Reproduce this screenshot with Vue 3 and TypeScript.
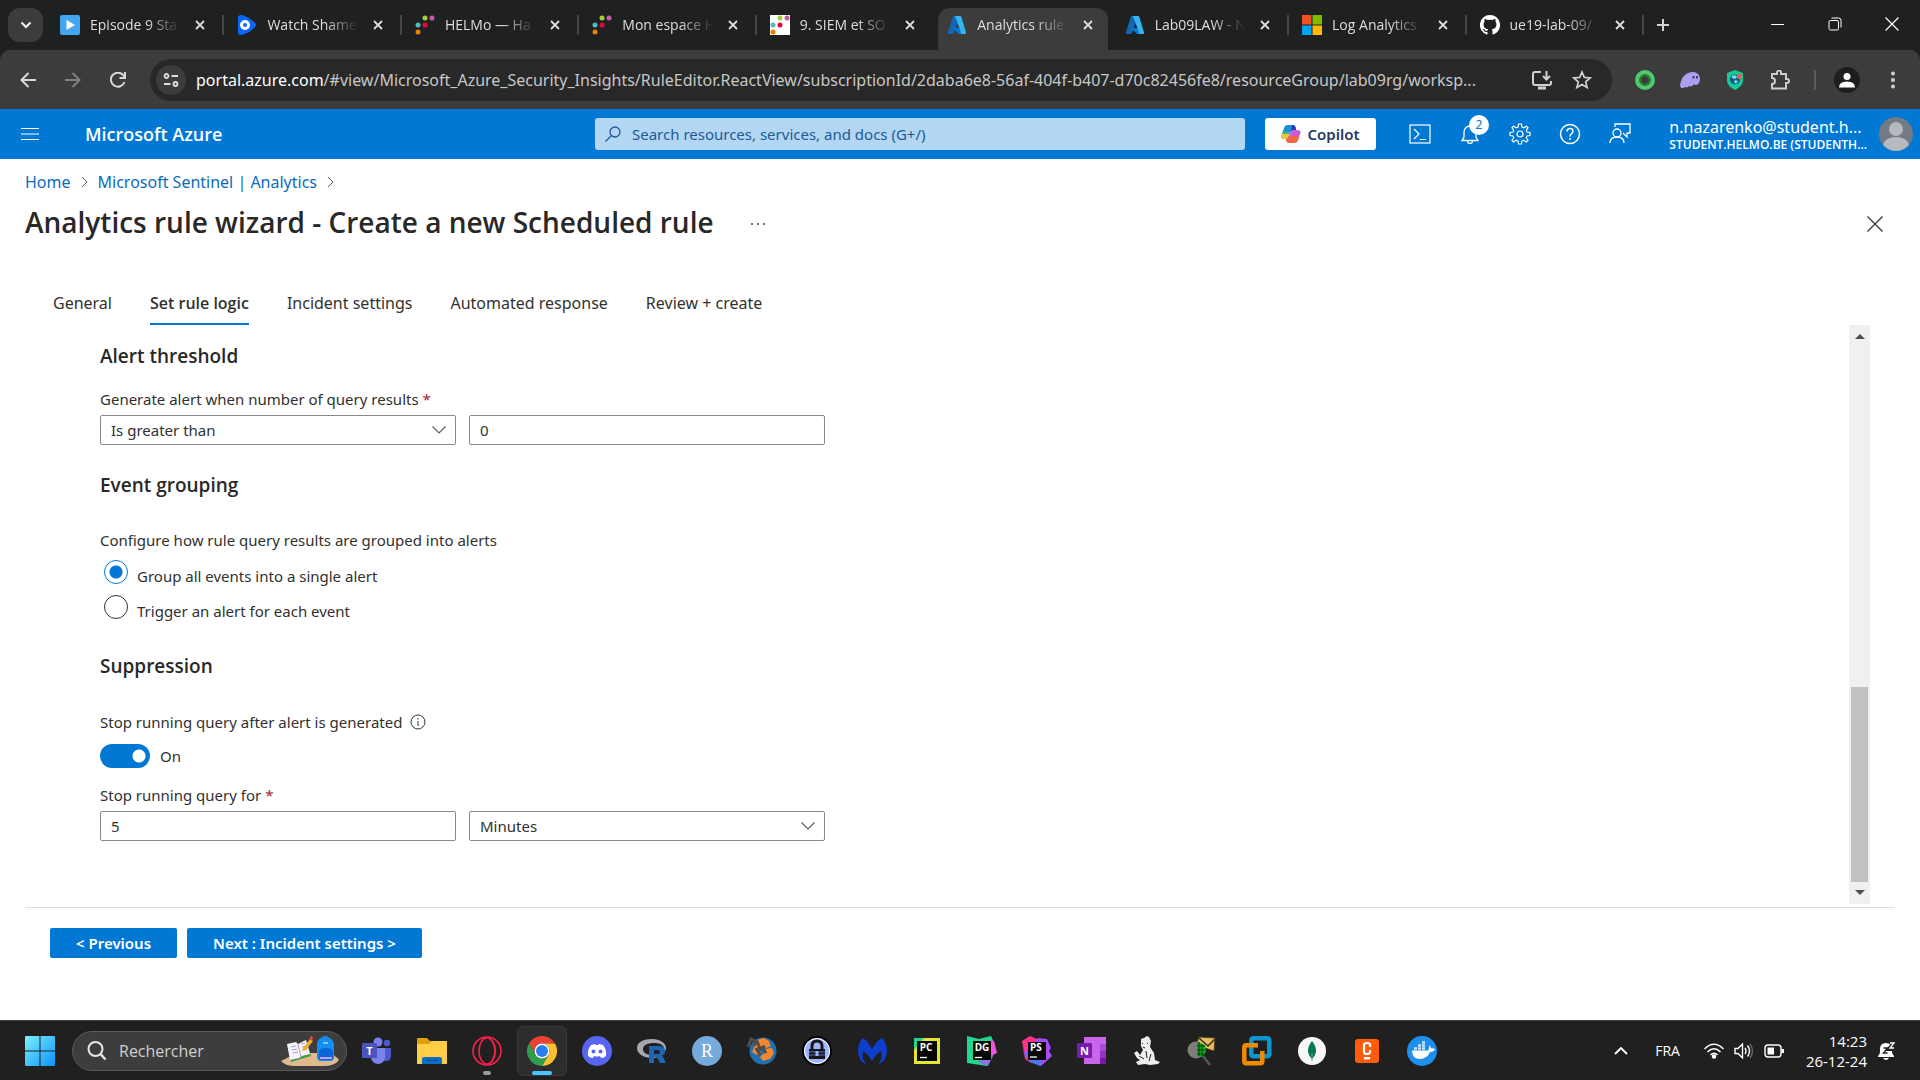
<script setup lang="ts">
import { ref } from 'vue'

interface BrowserTab {
  title: string
  icon: string
  active?: boolean
  divider?: boolean
}

const tabs: BrowserTab[] = [
  { title: 'Episode 9 Sta', icon: 'play', divider: true },
  { title: 'Watch Shame', icon: 'watch', divider: true },
  { title: 'HELMo — Ha', icon: 'helmo', divider: true },
  { title: 'Mon espace H', icon: 'helmo', divider: true },
  { title: '9. SIEM et SO', icon: 'helmo-box' },
  { title: 'Analytics rule', icon: 'azure', active: true },
  { title: 'Lab09LAW - N', icon: 'azure', divider: true },
  { title: 'Log Analytics', icon: 'microsoft', divider: true },
  { title: 'ue19-lab-09/', icon: 'github', divider: true },
]

const steps = ['General', 'Set rule logic', 'Incident settings', 'Automated response', 'Review + create']
const currentStep = ref('Set rule logic')

const operator = ref('Is greater than')
const threshold = ref('0')
const grouping = ref('single')
const suppression = ref(true)
const duration = ref('5')
const unit = ref('Minutes')
const search = ref('')
const taskSearch = ref('')
</script>

<template>
  <div class="screen">
    <header class="browser">
      <div class="tabstrip">
        <button class="tab-search" aria-label="Search tabs">
          <svg width="12" height="8" viewBox="0 0 12 8"><path d="M1.500 1.500 6 6l4.500-4.500" fill="none" stroke="#fff" stroke-width="2" /></svg>
        </button>
        <div class="tabs">
          <div v-for="tab in tabs" :key="tab.title" class="tab" :class="{ active: tab.active, divider: tab.divider }">
            <svg class="favicon" width="20" height="20" viewBox="0 0 20 20">
              <g v-if="tab.icon === 'play'">
                <rect width="20" height="20" rx="2" fill="#42a7f0" /><path d="M6.500 5v10l8.500-5z" fill="#fff" />
              </g>
              <g v-else-if="tab.icon === 'watch'">
                <path d="M1 3Q1 0 4 0c4 0 15 7 15 10S8 20 4 20Q1 20 1 17z" fill="#0866ff" />
                <circle cx="8" cy="10" r="3.500" fill="none" stroke="#fff" stroke-width="3" />
              </g>
              <g v-else-if="tab.icon === 'helmo' || tab.icon === 'helmo-box'">
                <rect v-if="tab.icon === 'helmo-box'" width="20" height="20" fill="#fff" />
                <circle cx="10" cy="3" r="2.500" fill="#a6cd3a" /><circle cx="17" cy="3" r="2.500" fill="#c75ba1" />
                <circle cx="3" cy="10" r="2.500" fill="#4fbdbb" /><circle cx="10" cy="10" r="2.500" fill="#e5053f" />
                <circle cx="3" cy="17" r="2.500" fill="#f57c00" />
              </g>
              <g v-else-if="tab.icon === 'azure'">
                <path d="M7 1h6L7 18q-.4 1-1.500 1H2q-1.500 0-1-1.500L5.700 2q.3-1 1.300-1z" fill="#1267b5" />
                <path d="M15 13H5.500l6 5.500q.5.500 1.500.500h5z" fill="#0078d4" />
                <path d="M7 1h6q1 0 1.400 1L19 17.500q.5 1.500-1 1.500h-5q1.300-.4 1-1.500L8.300 2Q8 1.200 7 1z" fill="#36b4ee" />
              </g>
              <g v-else-if="tab.icon === 'microsoft'">
                <path d="M0 0h9.500v9.500H0z" fill="#f25022" /><path d="M10.500 0H20v9.500h-9.500z" fill="#7fba00" />
                <path d="M0 10.500h9.500V20H0z" fill="#00a4ef" /><path d="M10.500 10.500H20V20h-9.500z" fill="#ffb900" />
              </g>
              <g v-else>
                <path d="M10 0a10 10 0 0 0-3.200 19.500c.5.1.7-.2.7-.5v-2c-2.800.6-3.400-1.200-3.400-1.200-.4-1.100-1.100-1.400-1.100-1.400-.9-.6.1-.6.1-.6 1 .1 1.500 1 1.500 1 .9 1.500 2.400 1.100 2.900.8.1-.6.4-1.100.7-1.300-2.300-.3-4.600-1.100-4.600-5 0-1.100.4-2 1-2.700-.1-.2-.4-1.300.1-2.600 0 0 .9-.3 2.800 1a9.500 9.500 0 0 1 5 0c1.900-1.300 2.800-1 2.800-1 .5 1.300.2 2.400.1 2.600.6.7 1 1.600 1 2.700 0 3.900-2.400 4.700-4.600 5 .4.300.7.9.7 1.900V19c0 .3.2.6.7.5A10 10 0 0 0 10 0z" fill="#fff" />
              </g>
            </svg>
            <span class="tab-title">{{ tab.title }}</span>
            <button class="tab-close" aria-label="Close tab">
              <svg width="10" height="10" viewBox="0 0 10 10"><path d="m1 1 8 8M9 1 1 9" stroke="#dedede" stroke-width="1.800" /></svg>
            </button>
          </div>
        </div>
        <button class="new-tab" aria-label="New tab">
          <svg width="14" height="14" viewBox="0 0 14 14"><path d="M7 1v12M1 7h12" stroke="#d5d5d5" stroke-width="2" /></svg>
        </button>
        <div class="window-controls">
          <button aria-label="Minimize"><svg width="14" height="14" viewBox="0 0 14 14"><path d="M0 7.500h13" stroke="#fff" /></svg></button>
          <button aria-label="Restore">
            <svg width="14" height="14" viewBox="0 0 14 14" fill="none" stroke="#fff"><rect x="1" y="3.500" width="9.500" height="9.500" rx="1.500" /><path d="M3.500 1h7q2.500 0 2.500 2.500v7" /></svg>
          </button>
          <button aria-label="Close"><svg width="14" height="14" viewBox="0 0 14 14"><path d="m.5.500 13 13m0-13-13 13" stroke="#fff" stroke-width="1.200" /></svg></button>
        </div>
      </div>

      <div class="toolbar">
        <nav class="history">
          <button aria-label="Back"><svg width="16" height="16" viewBox="0 0 16 16" fill="none" stroke="#d8d8d8" stroke-width="2"><path d="M16 8H2M8.500 1 1.500 8l7 7" /></svg></button>
          <button aria-label="Forward"><svg width="16" height="16" viewBox="0 0 16 16" fill="none" stroke="#808080" stroke-width="2"><path d="M0 8h14M7.500 1l7 7-7 7" /></svg></button>
          <button aria-label="Reload"><svg width="16" height="16" viewBox="0 0 16 16" fill="none" stroke="#d8d8d8" stroke-width="2"><path d="M14.500 10A7 7 0 1 1 13.500 3.500L15 5.500M15 0v6H9.500" /></svg></button>
        </nav>
        <div class="omnibox">
          <button class="site-info" aria-label="Site information">
            <svg width="16" height="14" viewBox="0 0 16 14" fill="none" stroke="#dedede" stroke-width="1.800"><circle cx="3.500" cy="3" r="2" /><path d="M8.500 3H15M1 11h6.500" /><circle cx="12.500" cy="11" r="2" /></svg>
          </button>
          <span class="url"><b>portal.azure.com</b>/#view/Microsoft_Azure_Security_Insights/RuleEditor.ReactView/subscriptionId/2daba6e8-56af-404f-b407-d70c82456fe8/resourceGroup/lab09rg/worksp...</span>
          <button aria-label="Install app"><svg width="22" height="20" viewBox="0 0 22 20" fill="none" stroke="#d0d0d0" stroke-width="2"><path d="M10 2H4Q2 2 2 4v9q0 2 2 2h14q2 0 2-2v-2M15.500 1v8M12 6l3.500 3.500L19 6" /><path d="M7 18h8" stroke-width="3" /></svg></button>
          <button aria-label="Bookmark"><svg width="20" height="20" viewBox="0 0 20 20" fill="none" stroke="#d0d0d0" stroke-width="1.700"><path d="m10 2 2.300 5.400 5.900.5-4.500 3.900 1.400 5.700-5.100-3-5.100 3 1.400-5.700-4.500-3.900 5.900-.5z" /></svg></button>
        </div>
        <div class="extensions">
          <button aria-label="Ring extension"><svg width="20" height="20" viewBox="0 0 20 20"><circle cx="10" cy="10" r="7" fill="none" stroke="#53c96d" stroke-width="6" /><circle cx="10" cy="10" r="5" fill="none" stroke="#237c3a" stroke-width="2" /></svg></button>
          <button aria-label="Wallet extension"><svg width="20" height="20" viewBox="0 0 20 20"><path d="M0 16C1 7 6 2 13 2c4 0 7 3 7 7 0 3-2 6-4 6-1 0-1.500-.5-2-1-1 2-3 3-5 2-1 1-2 2-4 1-1 1-4 2-5-1z" fill="#ab9ff2" /><path d="M13.500 6v2.500M17 6v2.500" stroke="#3c315b" stroke-width="1.800" /></svg></button>
          <button aria-label="Shield extension"><svg width="20" height="20" viewBox="0 0 20 20"><path d="m10 0 8 3v7c0 5-4 8-8 10-4-2-8-5-8-10V3z" fill="#18c997" /><circle cx="10" cy="9.500" r="5" fill="#15588b" /><path d="M7 6q4-2 5 1l-2 2-3-1zM10 10l3 1-2 3-2-2z" fill="#6ee7d5" /><circle cx="14.500" cy="6.500" r="2.500" fill="#ef5b5b" /></svg></button>
          <button aria-label="Extensions"><svg width="20" height="20" viewBox="0 0 20 20" fill="none" stroke="#d0d0d0" stroke-width="1.900"><path d="M2 4h5V2.500a2 2 0 0 1 4 0V4h5v5h1a2 2 0 0 1 0 4h-1v5.500H2V14a3 3 0 0 0 0-6z" /></svg></button>
          <i class="rule"></i>
          <button class="profile" aria-label="Profile"><svg width="16" height="16" viewBox="0 0 16 16" fill="#fff"><circle cx="8" cy="4.500" r="3.500" /><path d="M0 15.500q0-6 8-6t8 6z" /></svg></button>
          <button aria-label="Menu"><svg width="4" height="18" viewBox="0 0 4 18" fill="#d0d0d0"><circle cx="2" cy="2.500" r="2" /><circle cx="2" cy="9" r="2" /><circle cx="2" cy="15.500" r="2" /></svg></button>
        </div>
      </div>
    </header>

    <header class="azure">
      <div class="azure-left">
        <button class="burger" aria-label="Show portal menu"><svg width="18" height="14" viewBox="0 0 18 14"><path d="M0 1.500h18M0 7h18M0 12.500h18" stroke="#fff" stroke-width="1.200" /></svg></button>
        <a class="brand" href="#home">Microsoft Azure</a>
      </div>
      <label class="azure-search">
        <svg width="16" height="16" viewBox="0 0 16 16" fill="none" stroke="#1a5c99" stroke-width="1.300"><circle cx="10" cy="6" r="5" /><path d="M6.500 9.500.5 15.500" /></svg>
        <input v-model="search" type="text" aria-label="Search" placeholder="Search resources, services, and docs (G+/)" />
      </label>
      <div class="azure-right">
        <button class="copilot">
          <svg width="20" height="20" viewBox="0 0 20 20">
            <path d="M6 1h6q2 0 2.500 2l.5 3h-3Q10 6 9 9l-1.500 4Q7 15 5 15H2.500Q0 15 .5 12L3 4q1-3 3-3z" fill="#1b8ee0" />
            <path d="M1 10 .5 12Q0 15 2.500 15H5q2 0 2.500-2l1-3z" fill="#f2c230" />
            <path d="M2 7 1 10h7.500L9 8z" fill="#3db58a" />
            <path d="M12 6h4q4 0 3.500 3L17 16q-1 3-3 3H8q-2 0-2.500-2L5 15q2 0 2.500-2L10 7.500Q10.500 6 12 6z" fill="#c95adb" />
            <path d="m8 12-.5 1Q7 15 5 15l.5 2q.5 2 2.500 2h6q2 0 3-3l1.300-4z" fill="#f1673f" />
            <path d="M11 1h1q2 0 2.500 2l.5 3h-3q-1 0-2 1.500z" fill="#253db0" />
          </svg>
          <span>Copilot</span>
        </button>
        <div class="azure-icons">
          <button aria-label="Cloud Shell"><svg width="22" height="20" viewBox="0 0 22 20" fill="none" stroke="#fff" stroke-width="1.200"><rect x="1" y="1" width="20" height="18" /><path d="m5 5 5 5-5 5M11 15.500h6" /></svg></button>
          <button class="bell" aria-label="Notifications">
            <svg width="18" height="20" viewBox="0 0 18 20" fill="none" stroke="#fff" stroke-width="1.300"><path d="M1 16.500h16l-2-3.500V8A6 6 0 0 0 3 8v5zM6.500 17a2.500 2.500 0 0 0 5 0" /></svg>
            <span class="badge">2</span>
          </button>
          <button aria-label="Settings"><svg width="22" height="22" viewBox="0 0 22 22" fill="none" stroke="#fff" stroke-width="1.200"><path d="m9.500 1-.5 3-1.800.8L4.500 3.200 3 4.700l1.700 2.700L4 9l-3 .5v3l3 .5.700 1.700L3 17.400 4.500 19l2.700-1.800L9 18l.5 3h3l.5-3 1.700-.7 2.700 1.700 1.600-1.600-1.700-2.700L18 13l3-.5v-3L18 9l-.7-1.600L19 4.700l-1.600-1.500-2.700 1.600L13 4l-.5-3z" /><circle cx="11" cy="11" r="3" /></svg></button>
          <button aria-label="Help"><svg width="22" height="22" viewBox="0 0 22 22" fill="none" stroke="#fff" stroke-width="1.500"><circle cx="11" cy="11" r="9.500" /><path d="M8 8.500q0-3 3-3t3 2.700c0 2.300-3 2.300-3 5.300M11 15v2" /></svg></button>
          <button aria-label="Feedback"><svg width="22" height="22" viewBox="0 0 22 22" fill="none" stroke="#fff" stroke-width="1.300"><circle cx="8" cy="10" r="4" /><path d="M1 20q0-6 7-6t7 6M6 4V1h15v9h-3v4l-4-4" /></svg></button>
        </div>
        <button class="account">
          <span class="account-text"><span class="user">n.nazarenko@student.h...</span><span class="tenant">STUDENT.HELMO.BE (STUDENTH...</span></span>
          <svg width="34" height="34" viewBox="0 0 34 34"><defs><clipPath id="avatar"><circle cx="17" cy="17" r="17" /></clipPath></defs><g clip-path="url(#avatar)"><path d="M0 0h34v34H0z" fill="#737a85" /><circle cx="17" cy="12" r="7" fill="#b5babf" /><path d="M3 34q0-14 14-14t14 14z" fill="#b5babf" /></g></svg>
        </button>
      </div>
    </header>

    <main class="blade">
      <nav class="crumbs" aria-label="Breadcrumb">
        <a href="#home">Home</a>
        <svg width="7" height="12" viewBox="0 0 7 12"><path d="m1 1 5 5-5 5" fill="none" stroke="#605e5c" /></svg>
        <a href="#analytics">Microsoft Sentinel | Analytics</a>
        <svg width="7" height="12" viewBox="0 0 7 12"><path d="m1 1 5 5-5 5" fill="none" stroke="#605e5c" /></svg>
      </nav>
      <div class="title-row">
        <h1>Analytics rule wizard - Create a new Scheduled rule</h1>
        <button class="more" aria-label="More"><svg width="14" height="2" viewBox="0 0 14 2" fill="#444"><circle cx="1" cy="1" r="1" /><circle cx="7" cy="1" r="1" /><circle cx="13" cy="1" r="1" /></svg></button>
        <button class="blade-close" aria-label="Close"><svg width="16" height="16" viewBox="0 0 16 16"><path d="m.5.500 15 15m0-15-15 15" stroke="#323130" stroke-width="1.200" /></svg></button>
      </div>

      <div class="steps" role="tablist">
        <button v-for="step in steps" :key="step" role="tab" :class="{ current: step === currentStep }" @click="currentStep = step">{{ step }}</button>
      </div>

      <div class="pane">
        <form class="form" @submit.prevent>
          <section class="threshold">
            <h2>Alert threshold</h2>
            <label for="operator">Generate alert when number of query results <em>*</em></label>
            <div class="pair">
              <div class="select">
                <select id="operator" v-model="operator"><option>Is greater than</option><option>Is fewer than</option></select>
                <svg width="14" height="8" viewBox="0 0 14 8"><path d="m.5.500 6.500 6.500L13.500.500" fill="none" stroke="#605e5c" stroke-width="1.200" /></svg>
              </div>
              <input v-model="threshold" type="text" aria-label="Threshold" />
            </div>
          </section>

          <section class="grouping">
            <h2>Event grouping</h2>
            <p>Configure how rule query results are grouped into alerts</p>
            <label class="radio"><input v-model="grouping" type="radio" value="single" /><span>Group all events into a single alert</span></label>
            <label class="radio"><input v-model="grouping" type="radio" value="each" /><span>Trigger an alert for each event</span></label>
          </section>

          <section class="suppression">
            <h2>Suppression</h2>
            <label class="info" for="suppress">Stop running query after alert is generated
              <svg width="16" height="16" viewBox="0 0 16 16" fill="none" stroke="#323130"><circle cx="8" cy="8" r="7" /><path d="M8 7v5M8 4v1.500" /></svg>
            </label>
            <div class="toggle"><input id="suppress" v-model="suppression" type="checkbox" role="switch" /><span>{{ suppression ? 'On' : 'Off' }}</span></div>
            <label for="duration">Stop running query for <em>*</em></label>
            <div class="pair">
              <input id="duration" v-model="duration" type="text" />
              <div class="select">
                <select v-model="unit" aria-label="Unit"><option>Minutes</option><option>Hours</option></select>
                <svg width="14" height="8" viewBox="0 0 14 8"><path d="m.5.500 6.500 6.500L13.500.500" fill="none" stroke="#605e5c" stroke-width="1.200" /></svg>
              </div>
            </div>
          </section>
        </form>
        <div class="scrollbar" aria-hidden="true">
          <svg width="10" height="5" viewBox="0 0 10 5"><path d="m0 5 5-5 5 5z" fill="#505050" /></svg>
          <i></i>
          <svg width="10" height="5" viewBox="0 0 10 5"><path d="m0 0 5 5 5-5z" fill="#505050" /></svg>
        </div>
      </div>

      <footer class="actions">
        <button>&lt; Previous</button>
        <button>Next : Incident settings &gt;</button>
      </footer>
    </main>

    <footer class="taskbar">
      <button class="start" aria-label="Start">
        <svg width="30" height="30" viewBox="0 0 30 30"><defs><linearGradient id="win" x1="0" y1="0" x2="1" y2="1"><stop offset="0" stop-color="#7cf0ff" /><stop offset="1" stop-color="#0a93fb" /></linearGradient></defs><path d="M1 0h13.500v14.500H0V1q0-1 1-1zm14.500 0H29q1 0 1 1v13.500H15.500zM0 15.500h14.500V30H1q-1 0-1-1zm15.500 0H30V29q0 1-1 1H15.500z" fill="url(#win)" /></svg>
      </button>
      <label class="task-search">
        <svg width="20" height="20" viewBox="0 0 20 20" fill="none" stroke="#e6e6e6"><circle cx="8.500" cy="8" r="7" stroke-width="2" /><path d="m13.500 13 5 5.500" stroke-width="2.500" /></svg>
        <input v-model="taskSearch" type="text" aria-label="Rechercher" placeholder="Rechercher" />
        <svg width="58" height="32" viewBox="0 0 58 32">
          <path d="M0 26 16 18h30q9 2 12 7-4 6-16 6H14Q4 31 0 26z" fill="#e0b98c" />
          <path d="m7 12 19-5 4 14-20 6z" fill="#3f9d52" /><path d="m6 9 9-2 2 2 8-4 4 14-8 2-3 2-9 2z" fill="#f5f2fa" /><path d="m17 9 3 13M10 12l5-1m-4 4 5-1m-4 4 5-1m3-8 4-1m-3 4 4-1m-3 4 4-1" stroke="#aaa3bd" />
          <path d="m22 13 7-9 3 2-7 9-4 1z" fill="#f7a92b" /><path d="m28 4 2-3 2 1-1 4z" fill="#e2474b" />
          <path d="M41 4q3-5 7 0" fill="none" stroke="#2c7dd0" stroke-width="2" /><path d="M36 10q0-8 8-8t9 8v12q0 4-4 4h-9q-4 0-4-4z" fill="#148df5" /><path d="M38 17q0-4 7-4t7 4v6q0 2-2 2H40q-2 0-2-2z" fill="#0965d8" /><path d="M39 22h12v2H39z" fill="#c8a1ff" /><path d="M42 8h5" stroke="#75d3ff" stroke-width="2" />
        </svg>
      </label>

      <div class="apps">
        <button aria-label="Teams"><svg viewBox="0 0 30 30"><circle cx="16" cy="6" r="4.500" fill="#7b83eb" /><circle cx="25" cy="7" r="3.200" fill="#5059c9" /><path d="M20 12h9v8q0 5-5 5h-4z" fill="#5059c9" /><path d="M9 12h14v9a7 7 0 0 1-14 0z" fill="#7b83eb" /><rect y="7" width="15" height="15" rx="1" fill="#4b53bc" /><text x="7.500" y="18.500" font-size="11" class="glyph" fill="#fff">T</text></svg></button>
        <button aria-label="File Explorer"><svg viewBox="0 0 30 30"><path d="M0 3q0-1 1-1h9l3 3h16q1 0 1 1v8H0z" fill="#dda10a" /><path d="M0 8h12l3-3h14q1 0 1 1v22H0z" fill="#ffcf48" /><path d="M5 28v-5q0-2 2-2h16q2 0 2 2v5z" fill="#0a6fc2" /><path d="M9 24h12" stroke="#064a88" /></svg></button>
        <button class="running" aria-label="Opera"><svg viewBox="0 0 30 30" fill="none" stroke="#f7204e" stroke-width="1.600"><circle cx="15" cy="15" r="14" /><ellipse cx="15" cy="15" rx="8" ry="13" /><path d="M20 5q7 9 0 20" /></svg></button>
        <button class="running selected" aria-label="Chrome"><svg viewBox="0 0 30 30"><path d="M15 0A15 15 0 0 1 28 7.500H15A7.500 7.500 0 0 0 8.500 18.800L2 7.500A15 15 0 0 1 15 0z" fill="#ea4335" /><path d="M28 7.500A15 15 0 0 1 15 30l6.500-11.300A7.500 7.500 0 0 0 15 7.500z" fill="#fbc02d" /><path d="M15 30A15 15 0 0 1 2 7.500l6.500 11.300a7.500 7.500 0 0 0 13 0z" fill="#2e9e4c" /><circle cx="15" cy="15" r="7.500" fill="#fff" /><circle cx="15" cy="15" r="6" fill="#2b7de9" /></svg></button>
        <button aria-label="Discord"><svg viewBox="0 0 30 30"><circle cx="15" cy="15" r="15" fill="#5865f2" /><path d="m9 9 4-1 1 1h2l1-1 4 1q4 5 3 11-2 2-5 2l-1-2q-3 1-6 0l-1 2q-3 0-5-2-1-6 3-11z" fill="#fff" /><circle cx="11.500" cy="15.500" r="2" fill="#5865f2" /><circle cx="18.500" cy="15.500" r="2" fill="#5865f2" /></svg></button>
        <button aria-label="R"><svg viewBox="0 0 30 30"><path d="M15 3c8 0 14 4 14 9s-6 10-14 10S0 18 0 12 7 3 15 3zm2 4C11 7 6 9 6 13s4 6 10 6 11-2 11-6-4-6-10-6z" fill="#a6a8ad" fill-rule="evenodd" /><path fill-rule="evenodd" d="M12 10h10q6 0 6 5 0 4-3 4l4 8h-6l-3-6h-3v6h-5zm5 4v4h4q2 0 2-2t-2-2z" fill="#1d66b5" /></svg></button>
        <button aria-label="RStudio"><svg viewBox="0 0 30 30"><circle cx="15" cy="15" r="15" fill="#75aadb" /><text x="15" y="21" font-size="18" class="serif" fill="#fff">R</text></svg></button>
        <button aria-label="Globe"><svg viewBox="0 0 30 30"><circle cx="16" cy="15" r="13.500" fill="#1d70b2" /><path d="m10 4 7-2 5 3 2 5-5 2-4-2-3 3 2 4-4 2-5-3zM17 13l8-1 2 5-4 6-7 2-3-4 4-4z" fill="#f6862b" /><path d="m1 11 3-8 5 2-2 5m3-5 3 8 5-3M9 12l4 7m2-8 4 6" stroke="#4c4c4c" stroke-width="3" fill="none" /></svg></button>
        <button aria-label="KeePass"><svg viewBox="0 0 30 30"><circle cx="15" cy="15" r="14" fill="#9fb5fa" stroke="#000" stroke-width="2" /><circle cx="15" cy="15" r="12.500" fill="none" stroke="#fff" /><path d="M10 14v-4q0-5 5-5t5 5v4" fill="none" stroke="#15171d" stroke-width="3" /><rect x="7" y="13" width="16" height="10" fill="#15171d" /><path d="M7 16h16M7 19h16" stroke="#5870bd" /><path d="M15 15v5" stroke="#9fb5fa" stroke-width="3" /></svg></button>
        <button aria-label="Malwarebytes"><svg viewBox="0 0 30 30"><path d="M6 2q4 2 9 11 5-9 10-11 5 5 5 13 0 9-9 14 5-6 3-14-4 2-9 10-5-8-9-10-2 8 4 14Q1 25 1 15 1 7 6 2z" fill="#0d3ecc" /></svg></button>
        <button aria-label="PyCharm"><svg viewBox="0 0 30 30"><path d="M2 2h26v26H2z" fill="#e8e52d" /><path d="M2 2h10L2 14z" fill="#21d789" /><path d="M5 5h20v20H5z" fill="#070707" /><text x="14" y="15" font-size="10" class="glyph" fill="#fff">PC</text><path d="M8 21.500h7" stroke="#fff" stroke-width="1.300" /></svg></button>
        <button aria-label="DataGrip"><svg viewBox="0 0 30 30"><path d="m0 0 12 3 12-3 4 9-8 21L0 27z" fill="#22d88f" /><path d="m26 12 3 2-8 16-10-4z" fill="#8b74e8" /><path d="m22 4 5 1 3 12-5 2z" fill="#f354de" /><path d="M6 5h18v19H6z" fill="#070707" /><text x="15" y="15" font-size="10" class="glyph" fill="#fff">DG</text><path d="M8 21.500h7" stroke="#fff" stroke-width="1.300" /></svg></button>
        <button aria-label="PhpStorm"><svg viewBox="0 0 30 30"><path d="m0 5 8-5 9 4-8 23-6-4z" fill="#ff318c" /><path d="m16 2 9 1 4 9-2 3 3 5-11 10-12-5L1 16l5-1z" fill="#a84bf7" /><path d="m2 16 6 10 10 4 2-8z" fill="#4d75f5" /><path d="M6 6h18v18H6z" fill="#070707" /><text x="14" y="15" font-size="10" class="glyph" fill="#fff">PS</text><path d="M8 21h7" stroke="#fff" stroke-width="1.300" /></svg></button>
        <button aria-label="OneNote"><svg viewBox="0 0 30 30"><path d="M7 1h22v27H7z" fill="#ca64ea" /><path d="M23 8h6v7h-6z" fill="#ae4bd5" /><path d="M23 15h6v7h-6z" fill="#9332bf" /><path d="M23 22h6v6h-6z" fill="#7719aa" /><rect y="7" width="15" height="15" rx="1" fill="#771cad" /><text x="7.500" y="18.500" font-size="11" class="glyph" fill="#fff">N</text></svg></button>
        <button aria-label="Bear"><svg viewBox="0 0 30 30"><path d="m9 3 3-1 3-2 2 1 2 4-1 6 4 6 1 7 5 2-2 2-8 1-5-1-7 1-2-3 4-2-3-2-3-5 3-2 3 4 3-5-2-4z" fill="#eee" /><path d="m10 7 1 1m4-1 1 1m-5 3 2 1M14 15l1 7m4-4-2 7M7 20l5 3" stroke="#202020" fill="none" /></svg></button>
        <button aria-label="Mail inspector"><svg viewBox="0 0 30 30"><path d="m12 1 16 1-1 13-9-3-8-5z" fill="#e3bf62" stroke="#584018" /><path d="m12 2 9 8 7-7" fill="none" stroke="#3a2a10" stroke-width="1.500" /><circle cx="9" cy="14" r="8.500" fill="#7d7d7a" /><path d="m10 6 8 3 1 7-4 5-5-1z" fill="#05b318" /><path d="M12 6v14m3-12v12M10 10h8m-8 4h8m-8 4h7" stroke="#033a08" /><path d="m16 20 7 9" stroke="#555" stroke-width="2.500" /></svg></button>
        <button aria-label="VMware"><svg viewBox="0 0 30 30" fill="none" stroke-width="4.500"><rect x="9.300" y="2.300" width="18" height="18" rx="2" stroke="#0b95d3" /><path d="M16 9.300H4.300q-2 0-2 2v14q0 2 2 2h14q2 0 2-2V15" stroke="#f38b00" /></svg></button>
        <button aria-label="MongoDB"><svg viewBox="0 0 30 30"><circle cx="15" cy="15" r="14" fill="#f8f8f8" /><path d="M15 5q-8 10 0 18 8-8 0-18z" fill="#08764e" /><path d="M15 17v8" stroke="#69a77c" /></svg></button>
        <button aria-label="Coda"><svg viewBox="0 0 30 30"><rect x="3" y="3" width="24" height="24" rx="3" fill="#ff5c0b" /><path d="M18 11V9q0-2-3-2t-3 2v7q0 2 3 2t3-2v-2" fill="none" stroke="#fff" stroke-width="2.200" /><path d="M12 21h6v2.500h-6z" fill="#fff" /></svg></button>
        <button aria-label="Docker"><svg viewBox="0 0 30 30"><circle cx="15" cy="15" r="15" fill="#1d90ed" /><path d="M5 14.500h16q2-2 1-5 2 1 2 3 2-.5 4 .5-1 3-5 3-3 7-10 7-8 0-8-8.500z" fill="#fff" /><path d="M7 12.500h3m1 0h3m1 0h3m-7-3h3m1 0h3m-3-3h3" stroke="#c7e5ff" stroke-width="2.500" /></svg></button>
      </div>

      <div class="tray">
        <button aria-label="Hidden icons"><svg width="14" height="8" viewBox="0 0 14 8"><path d="m1 7 6-6 6 6" fill="none" stroke="#fff" stroke-width="1.800" /></svg></button>
        <button class="language">FRA</button>
        <button class="status" aria-label="Network, sound and battery">
          <svg width="20" height="16" viewBox="0 0 20 16" fill="none" stroke="#fff" stroke-width="1.500"><path d="M.5 6Q10-3.500 19.500 6M3.500 9Q10 2.500 16.500 9M6.500 12Q10 8.500 13.500 12" /><circle cx="10" cy="13.500" r="1.500" fill="#fff" /></svg>
          <svg width="20" height="16" viewBox="0 0 20 16" fill="none" stroke="#fff" stroke-width="1.400"><path d="M1 5.500h3L8.500 1v14L4 10.500H1zM11 5q2 3 0 6m2.500-8.500q4 5.500 0 11" /><path d="M16 1q5 7 0 14" stroke="#666" /></svg>
          <svg width="20" height="14" viewBox="0 0 20 14"><rect x="1" y="1" width="16" height="12" rx="3" fill="none" stroke="#fff" stroke-width="1.400" /><path d="M3.500 3.500H10v7H3.500z" fill="#fff" /><path d="M17.500 5H20v4h-2.500z" fill="#fff" /></svg>
        </button>
        <button class="clock"><span>14:23</span><span>26-12-24</span></button>
        <button aria-label="Notifications"><svg width="18" height="20" viewBox="0 0 18 20"><path d="M0 15q2-2 2-4V8q0-6 6-6t6 6v3q0 2 2 4v1H0z" fill="#fff" /><path d="M5 17h6q-3 4-6 0z" fill="#fff" /><path d="M5.500 7h4l-4 5h4" fill="none" stroke="#202020" stroke-width="1.300" /><path d="M11 1h6l-6 7h6" fill="none" stroke="#202020" stroke-width="4" /><path d="M12 2h4l-4 5h4" fill="none" stroke="#fff" stroke-width="1.300" /></svg></button>
      </div>
    </footer>
  </div>
</template>

<style>
body { margin: 0; }
</style>

<style scoped>
* { box-sizing: border-box; }
.screen { min-height: 100vh; display: flex; flex-direction: column; font-family: "Noto Sans", "Open Sans", sans-serif; font-size: 15px; line-height: 20px; color: #323130; background: #fff; }
button { border: 0; padding: 0; margin: 0; background: none; font: inherit; color: inherit; display: flex; align-items: center; justify-content: center; }
input, select { font: inherit; color: inherit; margin: 0; }
svg { flex: none; display: block; }
a { text-decoration: none; }

.browser { background: #1f2120; color: #dedede; }
.tabstrip { display: flex; height: 50px; align-items: flex-start; }
.tab-search { width: 35px; height: 34px; margin: 8px 4px 0 8px; border-radius: 12px; background: #3c3c3c; flex: none; }
.tabs { display: flex; flex: 0 1 1597px; min-width: 0; height: 50px; }
.tab { position: relative; flex: 1 1 0; min-width: 0; display: flex; align-items: center; padding: 0 14px 0 13px; }
.tab.divider::after { content: ""; position: absolute; right: 0; top: 15px; width: 2px; height: 20px; background: #454545; }
.tab.active::before { content: ""; position: absolute; left: 4px; right: 4px; top: 8px; bottom: 0; border-radius: 12px 12px 0 0; background: #3c3c3c; }
.tab > * { position: relative; }
.tab-title { flex: 1; min-width: 0; margin: 0 5px 0 10px; white-space: nowrap; font-family: "Open Sans", sans-serif; font-size: 14px; mask-image: linear-gradient(to right, #000 60%, transparent 95%); }
.tab-close { width: 20px; height: 20px; flex: none; }
.new-tab { width: 38px; height: 50px; flex: none; }
.window-controls { display: flex; margin-left: auto; }
.window-controls button { width: 57px; height: 48px; }

.toolbar { height: 59px; display: flex; align-items: center; background: #3c3c3c; border-radius: 10px 10px 0 0; padding-right: 5px; }
.history { display: flex; padding: 0 10px 0 5px; }
.history button { width: 45px; height: 40px; }
.omnibox { flex: 1; min-width: 0; height: 42px; border-radius: 21px; background: #282828; display: flex; align-items: center; padding: 0 10px 0 6px; }
.omnibox button { width: 40px; height: 40px; flex: none; }
.omnibox .site-info { width: 30px; height: 30px; border-radius: 50%; background: #3c3c3c; }
.url { flex: 1; min-width: 0; overflow: hidden; white-space: nowrap; padding-left: 10px; font-size: 16px; line-height: 24px; color: #c7c7c7; }
.url b { font-weight: 400; color: #fff; }
.extensions { display: flex; align-items: center; padding-left: 10px; }
.extensions button { width: 45px; height: 40px; }
.extensions .rule { width: 2px; height: 20px; margin: 0 18px 0 12px; background: #5c5c5c; }
.extensions .profile { width: 26px; height: 26px; border-radius: 50%; background: #1d1f1f; margin-right: 10px; }

.azure { height: 50px; display: flex; align-items: center; justify-content: space-between; background: #0078d4; color: #fff; }
.azure-left { flex: 1 1 595px; display: flex; align-items: center; }
.burger { width: 60px; height: 50px; }
.brand { margin-left: 25px; color: #fff; font-weight: 600; font-size: 18px; line-height: 24px; font-family: "Open Sans", sans-serif; }
.azure-search { flex: 0 1 650px; height: 32px; display: flex; align-items: center; padding: 0 10px; gap: 11px; border-radius: 3px; background: #b3d6f2; }
.azure-search input { flex: 1; min-width: 0; border: 0; padding: 0; outline: 0; background: none; }
.azure-search input::placeholder { color: #1a5c99; opacity: 1; }
.azure-right { flex: 1 1 675px; display: flex; align-items: center; padding: 0 7px 0 20px; }
.copilot { width: 111px; height: 32px; gap: 6px; border-radius: 3px; background: #fff; color: #243a5e; font-weight: 600; font-size: 15px; }
.azure-icons { display: flex; margin-left: 19px; }
.azure-icons button { position: relative; width: 50px; height: 50px; }
.badge { position: absolute; left: 24px; top: 6px; width: 20px; height: 20px; border-radius: 50%; background: #fff; color: #0078d4; font-size: 12px; line-height: 20px; }
.account { margin-left: auto; gap: 12px; text-align: left; }
.account-text { display: flex; flex-direction: column; padding-top: 2px; font-family: "Open Sans", sans-serif; }
.user { font-size: 16px; line-height: 20px; font-family: "Noto Sans", sans-serif; }
.tenant { font-size: 12px; line-height: 16px; font-weight: 600; }

.blade { flex: 1; display: flex; flex-direction: column; padding: 11px 25px 0; }
.crumbs { display: flex; align-items: center; gap: 10px; line-height: 24px; font-size: 16px; }
.crumbs a { color: #0b6cbd; }
.title-row { display: flex; align-items: center; margin-top: 8px; }
h1 { margin: 0; font-family: "Open Sans", sans-serif; font-size: 28px; line-height: 40px; font-weight: 600; color: #292827; }
.more { width: 40px; height: 40px; margin-left: 24px; padding-top: 4px; }
.blade-close { width: 40px; height: 40px; margin-left: auto; padding-top: 4px; }
.steps { display: flex; gap: 38px; padding-left: 28px; margin-top: 41px; font-size: 16px; }
.steps button { height: 42px; border-bottom: 2px solid transparent; }
.steps .current { font-weight: 600; border-color: #0078d4; font-family: "Open Sans", sans-serif; }

.pane { flex: 1; display: flex; justify-content: space-between; padding-right: 25px; }
.form { flex: 0 1 800px; padding: 17px 0 62px 75px; }
h2 { margin: 0; font-family: "Open Sans", sans-serif; font-size: 19px; line-height: 28px; font-weight: 600; color: #292827; }
.form label, .form p { margin: 0; display: block; }
.form em { color: #a4262c; font-style: normal; }
.threshold > label { margin-top: 19px; }
.pair { display: grid; grid-template-columns: 1fr 1fr; gap: 13px; margin-top: 6px; }
.pair input, .select select { width: 100%; height: 30px; border: 1px solid #8a8886; border-radius: 2px; padding: 0 10px; background: #fff; font-size: 15px; }
.select { position: relative; }
.select select { display: block; appearance: none; }
.select svg { position: absolute; right: 10px; top: 11px; pointer-events: none; }
.grouping { margin-top: 26px; }
.grouping p { margin-top: 31px; margin-bottom: 10px; }
.form .radio { display: flex; height: 35px; padding-left: 4px; gap: 9px; }
.radio input { appearance: none; width: 24px; height: 24px; border: 1px solid #323130; border-radius: 50%; }
.radio input:checked { border-color: #0078d4; background: radial-gradient(circle, #0078d4 6px, transparent 7px); }
.radio span { padding-top: 6px; }
.suppression { margin-top: 22px; }
.form .info { display: flex; align-items: center; gap: 8px; margin-top: 32px; }
.toggle { display: flex; align-items: center; gap: 10px; margin: 12px 0 17px; }
.toggle input { appearance: none; width: 50px; height: 24px; border-radius: 12px; background: radial-gradient(circle at 13px 12px, #fff 6px, transparent 7px) #8a8886; }
.toggle input:checked { background: radial-gradient(circle at 39px 12px, #fff 6px, transparent 7px) #0078d4; }
.scrollbar { width: 21px; display: flex; flex-direction: column; align-items: center; padding: 9px 2px; background: #f0f0f0; }
.scrollbar i { width: 17px; height: 195px; margin-top: auto; margin-bottom: 8px; background: #c1c1c1; }
.actions { display: flex; gap: 10px; margin-top: 3px; border-top: 1px solid #e1dfdd; padding: 20px 25px 62px; }
.actions button { height: 30px; padding: 0 26px; border-radius: 2px; background: #0078d4; color: #fff; font-weight: 600; }

.taskbar { height: 60px; display: flex; align-items: center; background: #202020; border-top: 1px solid #3b3f3e; color: #fff; }
.start { width: 46px; height: 46px; margin: 0 9px 0 17px; }
.task-search { flex: 0 1 275px; min-width: 0; height: 40px; display: flex; align-items: center; padding: 0 7px 0 14px; border: 1px solid #5a5a5a; border-radius: 20px; background: #3d3d3d; }
.task-search input { flex: 1 1 0; width: 0; min-width: 0; border: 0; outline: 0; padding: 0 0 0 12px; background: none; font-family: "Open Sans", sans-serif; font-size: 16px; }
.task-search input::placeholder { color: #d0d0d0; opacity: 1; }
.apps { display: flex; gap: 5px; padding-left: 5px; }
.apps button { position: relative; width: 50px; height: 50px; border-radius: 6px; }
.apps svg { width: 30px; height: 30px; }
.apps .selected { background: #2d2d2d; border: 1px solid #383838; }
.running::after { content: ""; position: absolute; bottom: 1px; width: 8px; height: 4px; border-radius: 2px; background: #9a9a9a; }
.running.selected::after { bottom: 0; width: 20px; background: #4cc2ff; }
.glyph { font-family: "Open Sans", sans-serif; font-weight: 700; text-anchor: middle; }
.serif { font-family: "Liberation Serif", serif; text-anchor: middle; }
.tray { display: flex; align-items: center; margin-left: auto; padding-right: 24px; font-family: "Open Sans", sans-serif; }
.language { margin: 0 24px 0 27px; font-size: 14px; }
.status { gap: 10px; }
.clock { flex-direction: column; align-items: flex-end; margin: 0 11px 0 22px; font-size: 15px; line-height: 20px; }
</style>
